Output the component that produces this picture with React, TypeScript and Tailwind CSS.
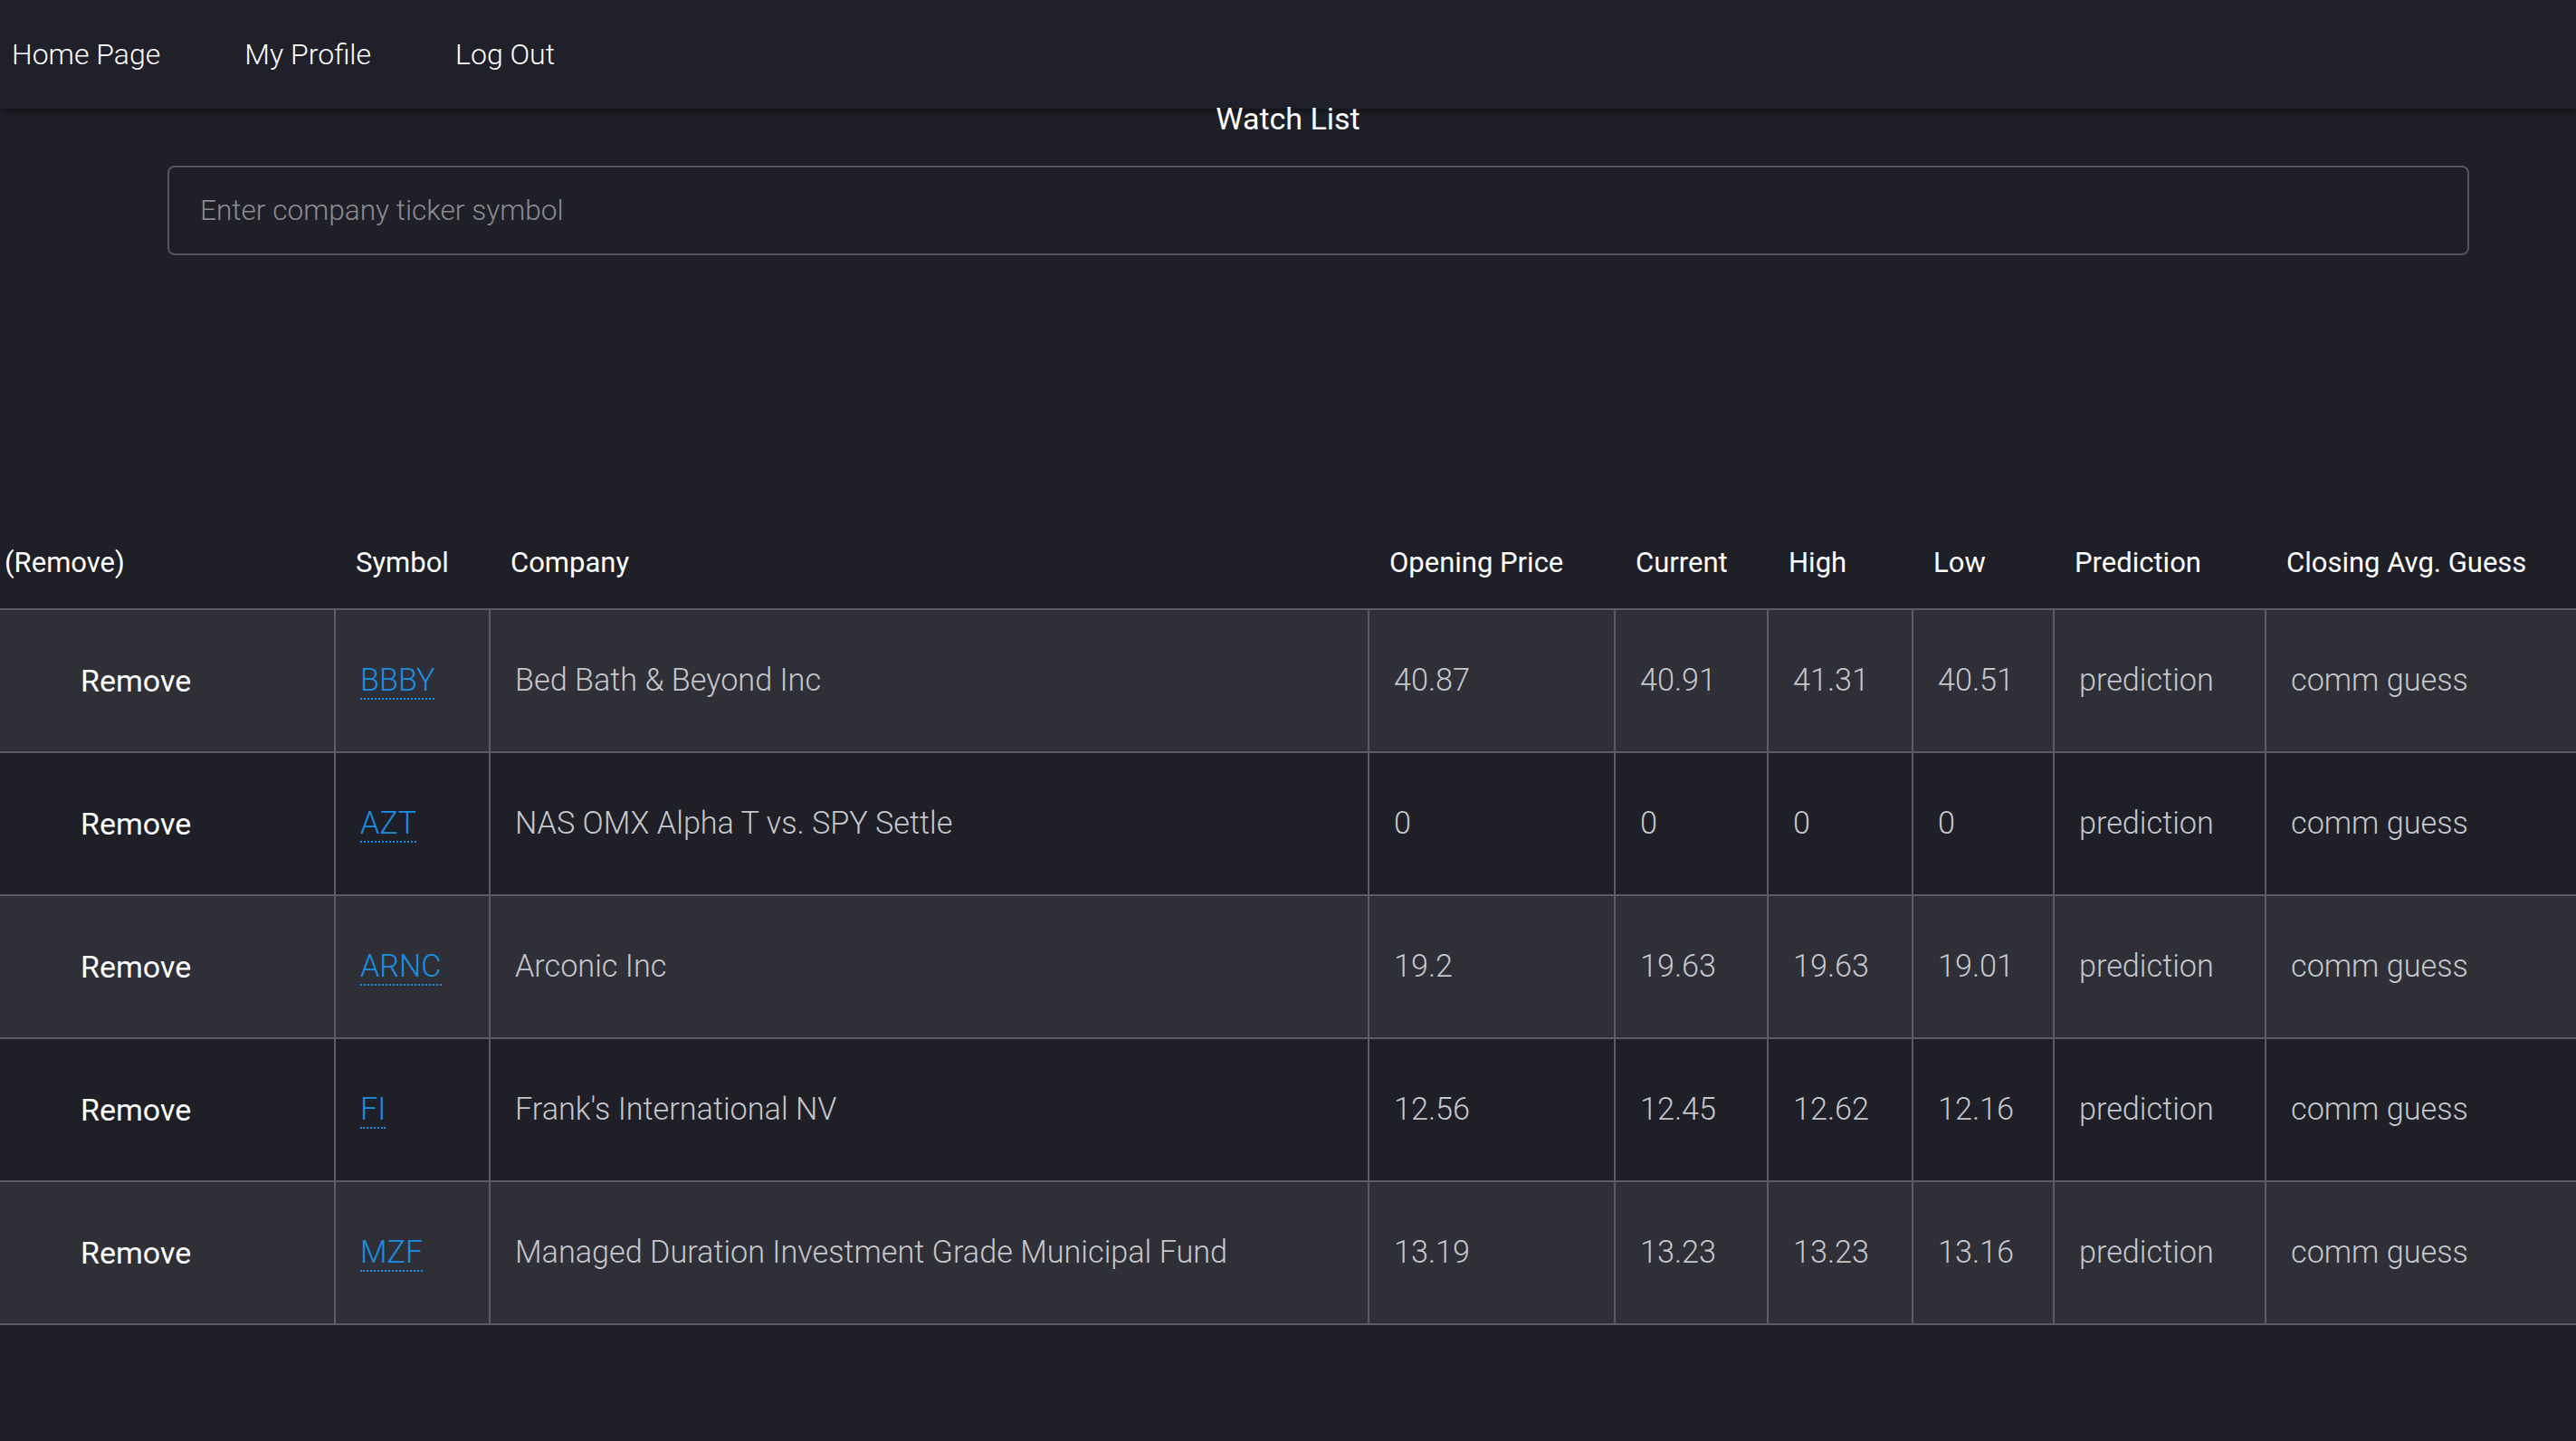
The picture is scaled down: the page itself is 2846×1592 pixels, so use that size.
import React from 'react';

type Row = {
  symbol: string;
  company: string;
  open: string;
  current: string;
  high: string;
  low: string;
};

const rows: Row[] = [
  { symbol: 'BBBY', company: 'Bed Bath & Beyond Inc', open: '40.87', current: '40.91', high: '41.31', low: '40.51' },
  { symbol: 'AZT', company: 'NAS OMX Alpha T vs. SPY Settle', open: '0', current: '0', high: '0', low: '0' },
  { symbol: 'ARNC', company: 'Arconic Inc', open: '19.2', current: '19.63', high: '19.63', low: '19.01' },
  { symbol: 'FI', company: "Frank's International NV", open: '12.56', current: '12.45', high: '12.62', low: '12.16' },
  { symbol: 'MZF', company: 'Managed Duration Investment Grade Municipal Fund', open: '13.19', current: '13.23', high: '13.23', low: '13.16' },
];

const headers = ['Symbol', 'Company', 'Opening Price', 'Current', 'High', 'Low', 'Prediction', 'Closing Avg. Guess'];
const widths = [370, 171, 971, 272, 169, 160, 156, 234, 343];

function NavBar() {
  return (
    <nav className="relative h-[120px] flex items-center pl-[13px] gap-[93px] bg-[#1f2029] shadow-[0_4px_6px_rgba(0,0,0,0.35)] text-[32px] font-light text-white">
      <a href="#">Home Page</a>
      <a href="#">My Profile</a>
      <a href="#">Log Out</a>
    </nav>
  );
}

function Cell({ children, last }: { children: React.ReactNode; last?: boolean }) {
  return (
    <td
      className={
        'h-[158px] align-middle border-y-2 border-x-2 border-[#5c5d63] pl-[27px] text-[#c6c7cb] font-light ' +
        (last ? 'border-r-0' : '')
      }
    >
      {children}
    </td>
  );
}

export default function App() {
  return (
    <div className="min-h-[1592px] bg-[#1e1f27] text-white" style={{ fontFamily: 'Roboto, "Open Sans", sans-serif' }}>
      <NavBar />
      <h1 className="relative z-10 -mt-[6px] h-[34px] text-center text-[34px] leading-none font-normal">Watch List</h1>

      <div className="mt-[35px] ml-[185px] mr-[118px]">
        <input
          type="text"
          placeholder="Enter company ticker symbol"
          className="w-full h-[99px] rounded-[8px] border-2 border-[#55565d] bg-transparent pl-[34px] text-[31.6px] font-light text-white placeholder:text-[#8b8c92] outline-none"
        />
      </div>

      <table className="mt-[291px] w-[2846px] table-fixed border-collapse text-[34.2px]">
        <colgroup>
          {widths.map((w, i) => (
            <col key={i} style={{ width: w }} />
          ))}
        </colgroup>
        <thead>
          <tr className="h-[100px]">
            <th className="text-left font-normal text-[31px] pl-[5px] align-middle">(Remove)</th>
            {headers.map((h) => (
              <th key={h} className="text-left font-normal text-[31px] pl-[23px] align-middle whitespace-nowrap">
                {h}
              </th>
            ))}
          </tr>
        </thead>
        <tbody>
          {rows.map((r, i) => (
            <tr key={r.symbol} className={i % 2 === 0 ? 'bg-[#2e2f37]' : 'bg-[#1e1f27]'}>
              <td className="h-[158px] align-middle border-y-2 border-r-2 border-[#5c5d63] pl-[89px] text-white font-normal text-[34px]">
                Remove
              </td>
              <Cell>
                <span className="text-[#1a8fe3] border-b-2 border-dotted border-[#1a8fe3]">{r.symbol}</span>
              </Cell>
              <Cell>{r.company}</Cell>
              <Cell>{r.open}</Cell>
              <Cell>{r.current}</Cell>
              <Cell>{r.high}</Cell>
              <Cell>{r.low}</Cell>
              <Cell>prediction</Cell>
              <Cell last>comm guess</Cell>
            </tr>
          ))}
        </tbody>
      </table>
    </div>
  );
}
